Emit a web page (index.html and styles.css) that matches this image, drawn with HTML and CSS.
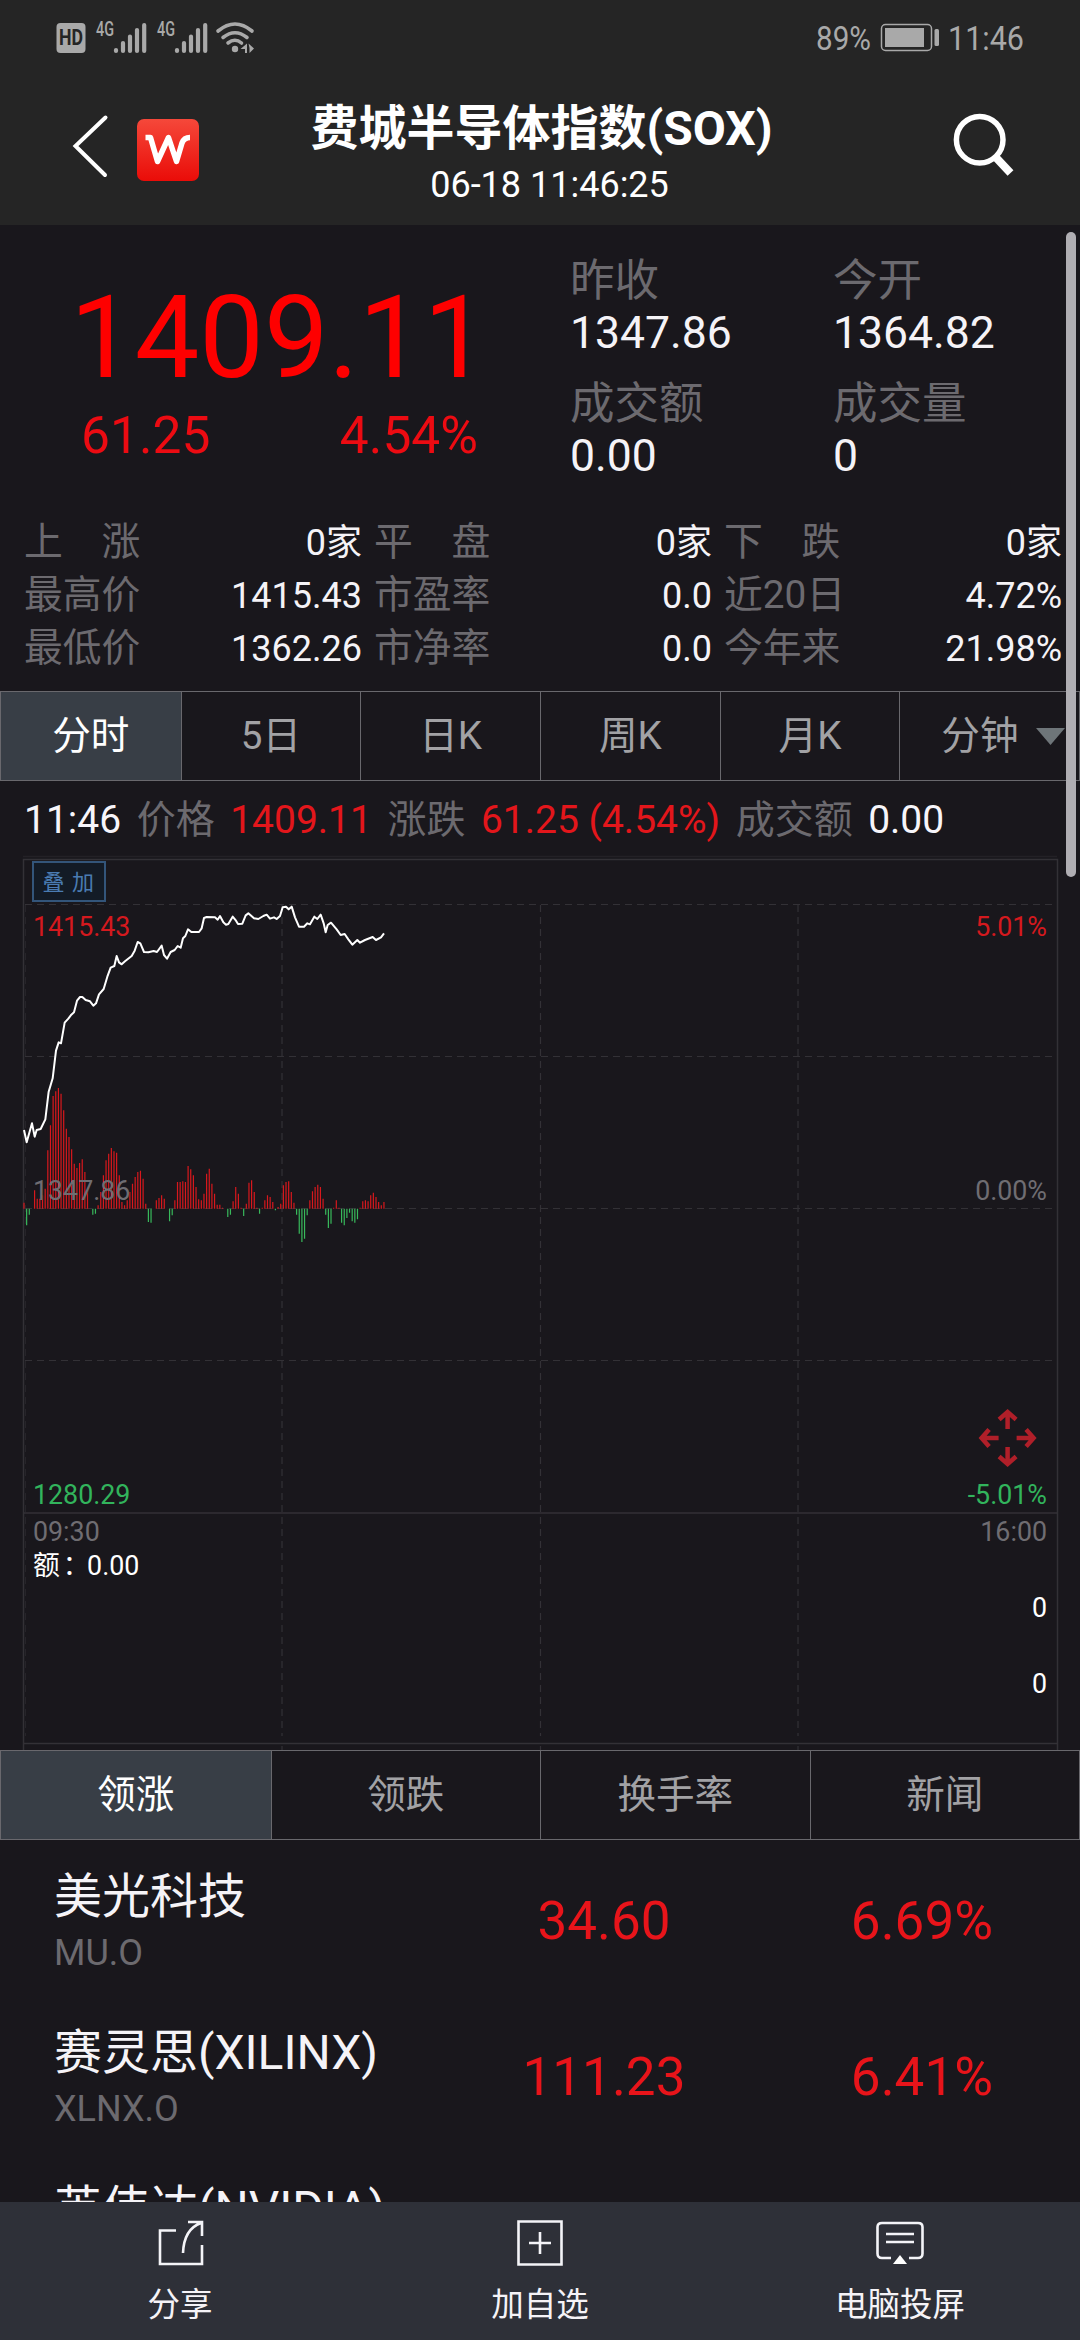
FILE: index.html
```html
<!DOCTYPE html>
<html lang="zh-CN">
<head>
<meta charset="utf-8">
<title>费城半导体指数(SOX)</title>
<link rel="stylesheet" href="styles.css">
</head>
<body>
<div class="screen">
  <header class="header">
    <div class="status">
      <svg width="210" height="76" viewBox="50 0 210 76" class="status-icons">
        <rect x="56.5" y="23" width="29" height="30" rx="4"/>
        <text x="59" y="45" class="hd" textLength="24" lengthAdjust="spacingAndGlyphs">HD</text>
        <text x="96" y="36" class="net" textLength="18" lengthAdjust="spacingAndGlyphs">4G</text>
        <text x="157" y="36" class="net" textLength="18" lengthAdjust="spacingAndGlyphs">4G</text>
        <path class="bars" d="M116 50V51M123 43V51M130 36.500V51M137 30V51M144.200 25V51M177 50V51M184 43V51M191 36.500V51M198 30V51M205.200 25V51"/>
        <path class="wifi" d="M218 31Q235 17 252 31M223 37.500Q235 28 247 37.500M228 43Q235 37.500 241.500 43"/>
        <circle cx="235" cy="49" r="3.200"/>
        <path d="M240.500 49L247 43.500V53H245V49zM248.500 43.500L254 48.500L249.500 53V48z"/>
      </svg>
      <svg width="220" height="76" viewBox="810 0 220 76" class="status-icons">
        <text x="816" y="50" class="clock" textLength="55" lengthAdjust="spacingAndGlyphs">89%</text>
        <rect x="881.500" y="24.500" width="50" height="26" rx="4" class="cell"/>
        <rect x="885" y="28" width="39" height="19"/>
        <rect x="934.500" y="29" width="4.500" height="17" rx="1.500"/>
        <text x="948" y="50" class="clock" textLength="76" lengthAdjust="spacingAndGlyphs">11:46</text>
      </svg>
    </div>
    <div class="nav">
      <svg class="nav-left" width="140" height="80" viewBox="66 110 140 80">
        <defs><linearGradient id="logo" x1="0" y1="0" x2="0" y2="1"><stop offset="0" stop-color="#f5483a"/><stop offset="1" stop-color="#ea0c08"/></linearGradient></defs>
        <path d="M105.500 117.500L75.500 146L105 175" fill="none" stroke="#fff" stroke-width="4" stroke-linecap="round"/>
        <rect x="137" y="119" width="62" height="62" rx="7" fill="url(#logo)"/>
        <path d="M145.500 137.500H150.500L157.500 161.500L168.500 137.500L176.500 161.500L182 143Q184 137.500 190 137.500" fill="none" stroke="#fff" stroke-width="5.500" stroke-linejoin="round"/>
      </svg>
      <div class="nav-title">
        <h1>费城半导体指数(SOX)</h1>
        <p>06-18 11:46:25</p>
      </div>
      <svg class="nav-search" width="70" height="80" viewBox="950 110 70 80">
        <circle cx="979.700" cy="139.700" r="23.300" fill="none" stroke="#fff" stroke-width="5.500"/>
        <path d="M995.500 157L1010.500 173" stroke="#fff" stroke-width="8"/>
      </svg>
    </div>
  </header>

  <section class="quote">
    <div class="price-block">
      <div class="price">1409.11</div>
      <div class="change"><span>61.25</span><span>4.54%</span></div>
    </div>
    <dl class="facts">
      <div><dt>昨收</dt><dd>1347.86</dd></div>
      <div><dt>今开</dt><dd>1364.82</dd></div>
      <div><dt>成交额</dt><dd>0.00</dd></div>
      <div><dt>成交量</dt><dd>0</dd></div>
    </dl>
  </section>

  <dl class="stats">
    <div><dt>上　涨</dt><dd>0家</dd></div>
    <div><dt>平　盘</dt><dd>0家</dd></div>
    <div><dt>下　跌</dt><dd>0家</dd></div>
    <div><dt>最高价</dt><dd>1415.43</dd></div>
    <div><dt>市盈率</dt><dd>0.0</dd></div>
    <div><dt>近20日</dt><dd>4.72%</dd></div>
    <div><dt>最低价</dt><dd>1362.26</dd></div>
    <div><dt>市净率</dt><dd>0.0</dd></div>
    <div><dt>今年来</dt><dd>21.98%</dd></div>
  </dl>

  <nav class="tabs">
    <a class="tab active">分时</a>
    <a class="tab">5日</a>
    <a class="tab">日K</a>
    <a class="tab">周K</a>
    <a class="tab">月K</a>
    <a class="tab more">分钟<svg width="29" height="17" viewBox="0 0 29 17"><path d="M0 0H29L14.500 17z" fill="#6e7579"/></svg></a>
  </nav>

  <div class="tick">
    <span class="t-white">11:46</span><span>价格</span><span class="t-red">1409.11</span><span>涨跌</span><span class="t-red">61.25 (4.54%)</span><span>成交额</span><span class="t-white">0.00</span>
  </div>

  <svg class="chart" width="1080" height="895" viewBox="0 855 1080 895">
    <g class="frame">
      <path d="M23 856.500H1057" opacity=".4"/>
      <path d="M23.500 1750V859.500H1057.500V1750M24 1513H1057M24 1743.500H1057"/>
    </g>
    <g class="grid">
      <path d="M25 904.500H1057M25 1056.500H1057M25 1208.500H1057M25 1360.500H1057"/>
      <path d="M25.500 905V1736" opacity=".5"/>
      <path d="M282 905V1736M540.500 905V1736M798 905V1736"/>
      <path d="M282 1746V1750M540.500 1746V1750M798 1746V1750"/>
    </g>
    <path id="bars-up" class="up"/>
    <path id="bars-down" class="down"/>
    <path id="price-line" class="line"/>
    <rect x="33" y="862" width="72" height="39" class="overlay-btn"/>
    <text x="42.500" y="889.500" class="overlay-text">叠</text>
    <text x="72" y="889.500" class="overlay-text">加</text>
    <g class="labels">
      <text x="33" y="936" class="f-red">1415.43</text>
      <text x="1047" y="936" class="f-red end">5.01%</text>
      <text x="33" y="1200" class="f-grey">1347.86</text>
      <text x="1047" y="1200" class="f-grey end">0.00%</text>
      <text x="33" y="1504" class="f-green">1280.29</text>
      <text x="1047" y="1504" class="f-green end">-5.01%</text>
      <text x="33" y="1541" class="f-grey">09:30</text>
      <text x="1047" y="1541" class="f-grey end">16:00</text>
      <text x="33" y="1575" class="f-white">额<tspan dx="3">：</tspan><tspan dx="-2.500">0.00</tspan></text>
      <text x="1047" y="1617" class="f-white end">0</text>
      <text x="1047" y="1692.500" class="f-white end">0</text>
    </g>
    <g class="move" transform="translate(1007.600 1438)">
      <path id="arrow" d="M0 -9V-25M-8.500 -18.500L0 -26L8.500 -18.500"/>
      <use href="#arrow" transform="rotate(90)"/>
      <use href="#arrow" transform="rotate(180)"/>
      <use href="#arrow" transform="rotate(270)"/>
    </g>
  </svg>

  <nav class="tabs board-tabs">
    <a class="tab active">领涨</a>
    <a class="tab">领跌</a>
    <a class="tab">换手率</a>
    <a class="tab">新闻</a>
  </nav>

  <ul class="board">
    <li><div class="stock"><b>美光科技</b><i>MU.O</i></div><span class="last">34.60</span><span class="pct">6.69%</span></li>
    <li><div class="stock"><b>赛灵思(XILINX)</b><i>XLNX.O</i></div><span class="last">111.23</span><span class="pct">6.41%</span></li>
    <li><div class="stock"><b>英伟达(NVIDIA)</b></div></li>
  </ul>

  <footer class="footer">
    <a>
      <svg width="48" height="48" viewBox="0 0 48 48"><path d="M20 11.500H4V45H46V26M32 3H46V17M45 4Q28 10 27 34"/></svg>
      <span>分享</span>
    </a>
    <a>
      <svg width="48" height="48" viewBox="0 0 48 48"><path d="M2.500 2.500H45.500V45.500H2.500zM24 13V35M13 24H35"/></svg>
      <span>加自选</span>
    </a>
    <a>
      <svg width="48" height="48" viewBox="0 0 48 48"><path d="M15 39H6Q1.500 39 1.500 34.500V8Q1.500 4 6 4H42Q46.500 4 46.500 8V34.500Q46.500 39 42 39H33M10 15H38M10 23H38"/><path d="M24 36L31 45H17z" class="solid"/></svg>
      <span>电脑投屏</span>
    </a>
  </footer>
  <div class="scrollbar"></div>
</div>
<script src="chart.js"></script>
</body>
</html>
```

FILE: styles.css
```css
* { box-sizing: border-box; margin: 0; padding: 0; }
body {
  background: #19171c;
  font-family: Roboto, "Noto Sans CJK SC", sans-serif;
  color: #f5f3f7;
}
svg { display: block; flex: none; }
.screen {
  position: relative;
  display: flex;
  flex-direction: column;
  width: 1080px;
  height: 2340px;
  overflow: hidden;
}

.header { height: 225px; background: #252525; flex: none; }
.status { display: flex; justify-content: space-between; padding: 0 50px; height: 76px; }
.status-icons { fill: #a9a9a9; }
.status-icons .hd { font-size: 22px; font-weight: 700; fill: #252525; }
.status-icons .net { font-size: 20px; font-weight: 500; }
.status-icons .clock { font-size: 33px; }
.status-icons .bars { fill: none; stroke: #a9a9a9; stroke-width: 4.2; stroke-linecap: round; }
.status-icons .wifi { fill: none; stroke: #a9a9a9; stroke-width: 3.6; stroke-linecap: round; }
.status-icons .cell { fill: none; stroke: #a9a9a9; stroke-width: 1.5; }

.nav { display: grid; grid-template-columns: 140px 1fr 70px; padding: 17px 60px 0 66px; }
.nav-left, .nav-search { margin-top: 17px; }
.nav-title { text-align: center; padding-right: 66px; white-space: nowrap; }
.nav-title h1 { font-size: 48px; font-weight: 700; line-height: 60px; padding: 6px 7px 0 0; margin: 0 -20px; color: #fff; }
.nav-title p { font-size: 36px; line-height: 50px; padding: 1px 0 0 9px; color: #fff; }

.quote { display: grid; grid-template-columns: 570px 1fr; height: 290px; flex: none; }
.price-block { padding: 53px 0 0 70px; color: #fe0000; }
.price { font-size: 115px; line-height: 120px; }
.change { display: flex; justify-content: space-between; width: 408px; padding: 8px 0 0 11px; font-size: 51.5px; line-height: 60px; color: #ec0b12; }
.facts { display: grid; grid-template-columns: 263px 1fr; align-content: start; row-gap: 19px; padding-top: 30px; font-size: 44.5px; line-height: 52px; }
dt { color: #6c6a6f; }

.stats { display: grid; grid-template-columns: repeat(3, 338px); grid-auto-rows: 53px; column-gap: 12px; padding: 0 0 0 24px; height: 176px; flex: none; }
.stats div { display: flex; justify-content: space-between; align-items: baseline; line-height: 53px; }
.stats dt { font-size: 38.8px; }
.stats dd { font-size: 36px; }

.tabs { display: grid; grid-template-columns: repeat(6, 1fr); height: 90px; flex: none; border: 1px solid #69686d; }
.tab { display: flex; align-items: center; justify-content: center; font-size: 38.6px; line-height: 88px; color: #a2a2a5; border-left: 1px solid #69686d; }
.tab:first-child { border-left: 0; }
.tab.active { background: #383e46; color: #fff; }
.tab.more { padding-left: 41px; gap: 18px; justify-content: flex-start; }
.board-tabs { grid-template-columns: repeat(4, 1fr); }

.tick { display: flex; gap: 15.5px; height: 74px; padding: 9px 0 0 24px; flex: none; font-size: 39px; line-height: 60px; color: #6c6a6f; white-space: nowrap; }
.t-white { color: #f7f5fa; }
.t-red { color: #e3161b; }

.chart { overflow: hidden; }
.frame { fill: none; stroke: #333136; stroke-width: 1.5; }
.grid { fill: none; stroke: #333136; stroke-width: 1.2; stroke-dasharray: 7 5; }
.up { stroke: #d8181d; stroke-width: 1.2; fill: none; }
.down { stroke: #38b95b; stroke-width: 1.2; fill: none; }
.line { stroke: #fff; stroke-width: 2; fill: none; stroke-linejoin: round; }
.overlay-btn { fill: #131b26; stroke: #33557a; stroke-width: 2; }
.overlay-text { font-size: 22px; fill: #4a7bb2; }
.labels { font-size: 26.8px; }
.end { text-anchor: end; }
.f-red { fill: #d4191e; }
.f-grey { fill: #6f6d72; }
.f-green { fill: #32b45c; }
.f-white { fill: #fff; }
.move { fill: none; stroke: #b01f29; stroke-width: 4.5; }

.board { list-style: none; height: 362px; overflow: hidden; flex: none; }
.board li { display: grid; grid-template-columns: 450px 200px 1fr; height: 156px; padding: 0 87px 0 54px; }
.stock { padding-top: 27px; }
.stock b, .stock i { display: block; font-style: normal; font-weight: 400; }
.stock b { font-size: 48px; line-height: 60px; white-space: nowrap; }
.stock i { font-size: 36px; line-height: 46px; padding-top: 3px; color: #6c6a6f; }
.last, .pct { padding-top: 51px; font-size: 53px; line-height: 60px; color: #e8141a; }
.last { text-align: center; }
.pct { text-align: right; }

.footer { display: grid; grid-template-columns: repeat(3, 1fr); height: 138px; flex: none; background: #2e3038; }
.footer a { display: flex; flex-direction: column; align-items: center; padding-top: 17px; }
.footer svg { fill: none; stroke: #f4f4f8; stroke-width: 2.6; }
.footer .solid { fill: #fff; stroke: none; }
.footer span { font-size: 32.5px; line-height: 50px; padding-top: 13px; }

.scrollbar { position: absolute; left: 1066px; top: 232px; width: 10px; height: 645px; border-radius: 5px; background: #b0aeb3; }
```

FILE: chart.js
```js
// Session chart: one sample per minute from the open; each unit is a third of a pixel.
const X0 = 72, STEP = 7.94, ZERO = 986;
const px = v => (v / 3).toFixed(2);
const py = v => (880 + v / 3).toFixed(2);

const momentum = [18,-50,-18,0,55,30,30,40,60,175,250,338,352,362,345,295,240,215,178,135,122,137,148,110,55,0,-18,-15,10,50,
  100,145,165,182,172,168,100,20,10,25,50,75,95,110,114,90,15,-40,-42,0,25,32,40,30,0,-38,-20,25,80,80,
  82,80,128,118,100,65,28,25,45,105,120,75,45,12,12,3,0,-25,-18,22,65,45,3,-22,15,78,85,50,3,-15,
  3,25,40,35,20,-5,5,15,70,80,82,50,18,-18,-75,-100,-90,-20,25,52,65,72,65,30,-18,-58,-45,3,25,3,
  -42,-50,-28,-12,-38,-42,-32,3,22,25,22,40,48,35,20,10,20];

const price = [72,750,80,787,96,730,104,770,110,750,122,747,136,718,146,635,158,595,168,512,176,487,183,490,194,428,205,416,
  214,404,222,397,231,362,240,351,247,351,257,360,270,364,280,377,288,370,297,343,311,327,322,290,332,263,343,258,350,228,
  357,247,365,253,375,244,395,228,404,212,413,186,421,190,432,216,445,217,461,213,471,216,485,197,492,225,501,236,512,216,
  524,210,533,198,542,203,549,175,556,168,564,148,574,156,597,156,605,145,612,114,620,111,645,112,653,119,660,108,670,127,
  678,134,685,132,698,110,708,122,714,132,727,131,737,106,745,100,762,115,775,117,790,108,800,104,810,116,822,112,830,117,
  840,108,848,82,858,80,866,88,875,80,885,112,897,140,912,140,922,130,930,133,943,110,952,117,962,104,971,130,977,157,
  983,135,993,128,1010,148,1022,165,1034,162,1045,178,1057,194,1072,180,1080,188,1095,180,1118,171,1128,180,1143,172,1152,160];

const bars = keep => momentum
  .map((h, i) => keep(h) ? `M${px(X0 + STEP * i)} ${py(ZERO)}V${py(ZERO - h)}` : '')
  .join('');
document.getElementById('bars-up').setAttribute('d', bars(h => h > 0));
document.getElementById('bars-down').setAttribute('d', bars(h => h < 0));

let d = '';
for (let i = 0; i < price.length; i += 2) d += `${i ? 'L' : 'M'}${px(price[i])} ${py(price[i + 1])}`;
document.getElementById('price-line').setAttribute('d', d);
```
